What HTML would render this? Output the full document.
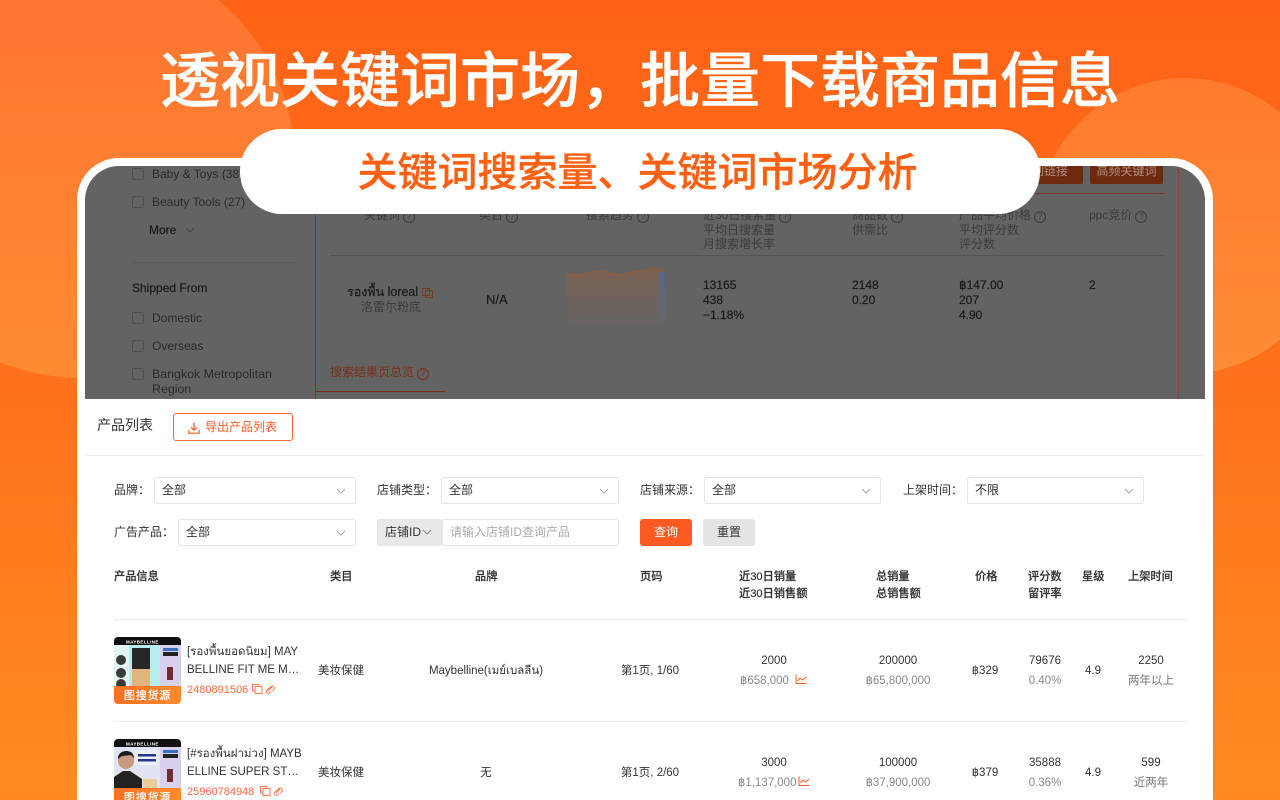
<!DOCTYPE html>
<html lang="zh-CN">
<head>
<meta charset="utf-8">
<title>透视关键词市场</title>
<style>
html,body{margin:0;padding:0;width:1280px;height:800px;overflow:hidden}
body{position:relative;font-family:"Liberation Sans","Noto Sans CJK SC",sans-serif;background:linear-gradient(180deg,#ff6216 0%,#ff6c1a 35%,#ff8a22 100%)}
.a{position:absolute;white-space:nowrap}
.c{position:absolute;white-space:nowrap;transform:translateX(-50%);text-align:center}
.circle{position:absolute;border-radius:50%}
#card{position:absolute;left:77px;top:158px;width:1136px;height:660px;background:#fff;border-radius:42px 42px 0 0}
#gray{position:absolute;left:85px;top:166px;width:1120px;height:233px;background:#636363;border-radius:34px 34px 0 0;overflow:hidden}
#gray .a,#gray .c{font-size:12px;color:#2b2b2b;line-height:15px}
#gray .d{color:#3c3c3c}
#gray .k{color:#1a1a1a;-webkit-text-stroke:.2px #1a1a1a}
.cb{position:absolute;width:10px;height:10px;border:1px solid #515151;border-radius:2px}
.q{display:inline-block;width:10px;height:10px;border:1px solid #3c3c3c;border-radius:50%;font-size:8px;line-height:10px;text-align:center;margin-left:3px;vertical-align:0;color:#3c3c3c}
#pill{position:absolute;left:240px;top:129px;width:795px;padding-right:5px;height:85px;border-radius:42px;background:#fff;text-align:center;color:#ff6114;font-size:40px;line-height:89px;font-weight:500;-webkit-text-stroke:.3px #ff6114}
#title{position:absolute;left:0;top:43px;width:1280px;text-align:center;color:#fff;font-size:60px;line-height:78px;font-weight:500;-webkit-text-stroke:.5px #fff}
.box{position:absolute;border:1px solid #e4e4e4;border-radius:3px;background:#fff;font-size:12px;line-height:25px;color:#333;padding-left:7px;box-sizing:border-box;height:27px}
.chev{position:absolute}
.l{font-size:12px;color:#333;line-height:16px}
.h{font-size:11.2px;color:#333;line-height:17px;font-weight:500;-webkit-text-stroke:.2px #333}
.t{font-size:11.5px;color:#333;line-height:16px}
.g{color:#888}
.o{color:#ff6a3d}
.hr{position:absolute;height:1px;background:#eeeeee}
</style>
</head>
<body>
<div class="circle" style="left:-133px;top:-50px;width:428px;height:428px;background:linear-gradient(180deg,#ff7331 0%,#ff8a32 100%)"></div>
<div class="circle" style="left:1037px;top:78px;width:296px;height:296px;background:linear-gradient(180deg,#ff7a2e 0%,#ff8c36 100%)"></div>
<div id="title">透视关键词市场，批量下载商品信息</div>

<div id="card"></div>
<div id="gray">
  <div class="cb" style="left:47px;top:2px"></div><div class="a" style="left:67px;top:1px">Baby &amp; Toys (38)</div>
  <div class="cb" style="left:47px;top:30px"></div><div class="a" style="left:67px;top:29px">Beauty Tools (27)</div>
  <div class="a k" style="left:64px;top:57px">More</div>
  <svg class="a" style="left:101px;top:62px" width="8" height="5" viewBox="0 0 8 5"><path d="M.5.5L4 4L7.500.5" fill="none" stroke="#444"/></svg>
  <div class="a" style="left:47px;top:96px;width:165px;height:1px;background:#5b5b5b"></div>
  <div class="a k" style="left:47px;top:115px">Shipped From</div>
  <div class="cb" style="left:47px;top:146px"></div><div class="a" style="left:67px;top:145px">Domestic</div>
  <div class="cb" style="left:47px;top:174px"></div><div class="a" style="left:67px;top:173px">Overseas</div>
  <div class="cb" style="left:47px;top:202px"></div><div class="a" style="left:67px;top:201px;font-size:12.400px">Bangkok Metropolitan<br>Region</div>

  <div class="a" style="left:230px;top:0;width:1px;height:233px;background:#7a3620"></div>
  <div class="a" style="left:1093px;top:0;width:1px;height:233px;background:#7f4a36"></div>
  <div class="a" style="left:231px;top:27px;width:848px;height:1px;background:#753a24"></div>
  <div class="a" style="left:245px;top:89px;width:835px;height:1px;background:#555"></div>
  <div class="a" style="left:231px;top:225px;width:129px;height:1px;background:#7a3018"></div>

  <div class="a" style="left:920px;top:-8px;width:78px;height:26px;background:#6d2a0f;border-radius:2px;color:#b08d7f;text-align:center;line-height:26px">复制链接</div>
  <div class="a" style="left:1005px;top:-8px;width:73px;height:26px;background:#6d2a0f;border-radius:2px;color:#b08d7f;text-align:center;line-height:26px">高频关键词</div>

  <div class="a d" style="left:279px;top:42px">关键词<span class="q">?</span></div>
  <div class="a d" style="left:394px;top:42px">类目<span class="q">?</span></div>
  <div class="a d" style="left:501px;top:42px">搜索趋势<span class="q">?</span></div>
  <div class="a d" style="left:618px;top:42px;line-height:14px">近30日搜索量<span class="q">?</span><br>平均日搜索量<br>月搜索增长率</div>
  <div class="a d" style="left:767px;top:42px;line-height:14px">商品数<span class="q">?</span><br>供需比</div>
  <div class="a d" style="left:874px;top:42px;line-height:14px">产品平均价格<span class="q">?</span><br>平均评分数<br>评分数</div>
  <div class="a d" style="left:1004px;top:42px">ppc竞价<span class="q">?</span></div>

  <div class="a k" style="left:262px;top:119px;font-size:12.500px">รองพื้น loreal</div>
  <div class="a" style="left:337px;top:122px;width:6px;height:6px;border:1px solid #7a3a22"></div>
  <div class="a" style="left:340px;top:124px;width:6px;height:6px;border:1px solid #7a3a22"></div>
  <div class="a d" style="left:276px;top:134px">洛雷尔粉底</div>
  <div class="a k" style="left:401px;top:126px;font-size:13px">N/A</div>

  <svg class="a" style="left:482px;top:100px" width="100" height="60" viewBox="0 0 100 60">
    <defs>
      <linearGradient id="tr" x1="0" y1="0" x2="0" y2="1"><stop offset="0" stop-color="#7a6050"/><stop offset="1" stop-color="#666464"/></linearGradient>
      <linearGradient id="tb" x1="0" y1="0" x2="0" y2="1"><stop offset="0" stop-color="#5a6488"/><stop offset="1" stop-color="#666666"/></linearGradient>
    </defs>
    <path d="M0 8 L12 8.500 L18 8 L26 5.500 L36 5.500 L46 8 L58 8.500 L66 6 L74 5 L84 3 L92 3 L98 5 L98 58 L0 58Z" fill="url(#tr)"/>
    <rect x="92" y="6" width="6" height="52" fill="url(#tb)"/>
    <path d="M0 8 L12 8.500 L18 8 L26 5.500 L36 5.500 L46 8 L58 8.500 L66 6 L74 5 L84 3 L92 3 L98 5" fill="none" stroke="#9a5a2c" stroke-width="1"/>
  </svg>

  <div class="a k" style="left:618px;top:112px">13165<br>438<br>−1.18%</div>
  <div class="a k" style="left:767px;top:112px">2148<br>0.20</div>
  <div class="a k" style="left:874px;top:112px">฿147.00<br>207<br>4.90</div>
  <div class="a k" style="left:1004px;top:112px">2</div>
  <div class="a" style="left:245px;top:199px;color:#7a3016">搜索结果页总览<span class="q" style="border-color:#7a3016;color:#7a3016">?</span></div>
</div>

<div id="pill">关键词搜索量、关键词市场分析</div>

<div class="a" style="left:97px;top:415px;font-size:14px;line-height:20px;color:#333">产品列表</div>
<div class="a" style="left:173px;top:413px;width:120px;height:28px;box-sizing:border-box;border:1px solid #ff6a3d;border-radius:3px;background:#fff"></div>
<svg class="a" style="left:187px;top:421px" width="14" height="14" viewBox="0 0 14 14"><path d="M7 1.500V9M4 6.300L7 9.200L10 6.300M1.800 9V12.200H12.200V9" fill="none" stroke="#ff5a24" stroke-width="1.200"/></svg>
<div class="a" style="left:205px;top:419px;font-size:12px;line-height:16px;color:#ff5a24">导出产品列表</div>
<div class="hr" style="left:85px;top:455px;width:1120px;background:#ececec"></div>

<div class="a l" style="left:114px;top:482px">品牌：</div>
<div class="box" style="left:154px;top:477px;width:202px">全部</div>
<div class="a l" style="left:377px;top:482px">店铺类型：</div>
<div class="box" style="left:441px;top:477px;width:178px">全部</div>
<div class="a l" style="left:640px;top:482px">店铺来源：</div>
<div class="box" style="left:704px;top:477px;width:177px">全部</div>
<div class="a l" style="left:903px;top:482px">上架时间：</div>
<div class="box" style="left:967px;top:477px;width:177px">不限</div>
<svg class="chev" style="left:336px;top:488px" width="10" height="6" viewBox="0 0 10 6"><path d="M1 1L5 5L9 1" fill="none" stroke="#a5a5a5"/></svg>
<svg class="chev" style="left:599px;top:488px" width="10" height="6" viewBox="0 0 10 6"><path d="M1 1L5 5L9 1" fill="none" stroke="#a5a5a5"/></svg>
<svg class="chev" style="left:861px;top:488px" width="10" height="6" viewBox="0 0 10 6"><path d="M1 1L5 5L9 1" fill="none" stroke="#a5a5a5"/></svg>
<svg class="chev" style="left:1124px;top:488px" width="10" height="6" viewBox="0 0 10 6"><path d="M1 1L5 5L9 1" fill="none" stroke="#a5a5a5"/></svg>

<div class="a l" style="left:114px;top:524px">广告产品：</div>
<div class="box" style="left:178px;top:519px;width:178px">全部</div>
<svg class="chev" style="left:336px;top:530px" width="10" height="6" viewBox="0 0 10 6"><path d="M1 1L5 5L9 1" fill="none" stroke="#a5a5a5"/></svg>
<div class="box" style="left:442px;top:519px;width:177px;color:#aaa">请输入店铺ID查询产品</div>
<div class="box" style="left:377px;top:519px;width:65px;background:#e9e9e9">店铺ID</div>
<svg class="chev" style="left:422px;top:529px" width="10" height="6" viewBox="0 0 10 6"><path d="M1 1L5 5L9 1" fill="none" stroke="#888"/></svg>
<div class="a" style="left:640px;top:519px;width:52px;height:27px;background:#ff5a22;border-radius:3px;color:#fff;font-size:12px;line-height:27px;text-align:center">查询</div>
<div class="a" style="left:703px;top:519px;width:52px;height:27px;background:#e4e4e4;border-radius:3px;color:#333;font-size:12px;line-height:27px;text-align:center">重置</div>

<div class="a h" style="left:114px;top:569px">产品信息</div>
<div class="a h" style="left:330px;top:569px">类目</div>
<div class="a h" style="left:475px;top:569px">品牌</div>
<div class="a h" style="left:640px;top:569px">页码</div>
<div class="a h" style="left:739px;top:569px">近30日销量<br>近30日销售额</div>
<div class="a h" style="left:876px;top:569px">总销量<br>总销售额</div>
<div class="a h" style="left:975px;top:569px">价格</div>
<div class="a h" style="left:1028px;top:569px">评分数<br>留评率</div>
<div class="a h" style="left:1082px;top:569px">星级</div>
<div class="a h" style="left:1128px;top:569px">上架时间</div>
<div class="hr" style="left:114px;top:619px;width:1075px"></div>
<div class="hr" style="left:114px;top:721px;width:1075px"></div>

<!-- Row 1 -->
<svg class="a" style="left:114px;top:637px;border-radius:4px" width="67" height="67" viewBox="0 0 67 67">
  <defs><linearGradient id="st" x1="0" y1="0" x2="1" y2="0"><stop offset="0" stop-color="#ff6f24"/><stop offset="1" stop-color="#ff8a2e"/></linearGradient></defs>
  <rect width="67" height="67" fill="#eef5f6"/>
  <rect width="67" height="8" fill="#111"/>
  <text x="12" y="6.500" font-size="4.500" fill="#fff" font-family="Liberation Sans" font-weight="700" letter-spacing=".4">MAYBELLINE</text>
  <rect y="8" width="46" height="41" fill="#b5ecec"/>
  <rect y="8" width="15" height="41" fill="#e3f3f3"/>
  <circle cx="7" cy="23" r="5" fill="#3a3a3a"/><circle cx="7" cy="36" r="5" fill="#3a3a3a"/><circle cx="7" cy="47" r="5" fill="#3a3a3a"/>
  <rect x="18" y="11" width="18" height="21" fill="#262626"/>
  <rect x="18" y="32" width="18" height="17" fill="#e0b57d"/>
  <rect x="46" y="8" width="21" height="41" fill="#d9d0ee"/>
  <rect x="49" y="11" width="15" height="3" fill="#3a70c0"/>
  <rect x="49" y="15" width="15" height="4" fill="#222"/>
  <rect x="53" y="30" width="6" height="13" fill="#6d2c33"/>
  <rect y="49" width="67" height="18" fill="url(#st)"/>
  <text x="33.500" y="62" text-anchor="middle" font-size="11" fill="#fff" stroke="#fff" stroke-width=".25" font-family="Noto Sans CJK SC" letter-spacing=".8">图搜货源</text>
</svg>
<div class="a t" style="left:187px;top:644px;line-height:17.500px">[รองพื้นยอดนิยม] MAY<br>BELLINE FIT ME M…</div>
<div class="a o" style="left:187px;top:683px;font-size:11px;line-height:15px">2480891506</div>
<svg class="a" style="left:251px;top:683px" width="28" height="12" viewBox="0 0 28 12" fill="none" stroke="#ff6a3d" stroke-width=".9"><rect x="1.500" y="1.500" width="6.500" height="6.500"/><rect x="4" y="3.500" width="7" height="7" fill="#fff"/><path d="M17 8L21 4M18 5.500L19.500 4A1.800 1.800 0 0 1 23 6.500L21.500 8M20 8.500L18.500 10A1.800 1.800 0 0 1 16 7L17.500 5.500"/></svg>
<div class="a t" style="left:318px;top:663px">美妆保健</div>
<div class="c t" style="left:486px;top:663px">Maybelline(เมย์เบลลีน)</div>
<div class="c t" style="left:650px;top:663px">第1页, 1/60</div>
<div class="c t" style="left:774px;top:653px">2000</div>
<div class="a t g" style="left:740px;top:673px">฿658,000</div>
<svg class="a" style="left:795px;top:674px" width="12" height="11" viewBox="0 0 12 11" fill="none" stroke="#ff5a24" stroke-width="1"><path d="M1 .5V9.500H11.500M2.500 7L5 4L7.500 6L11 3"/></svg>
<div class="c t" style="left:898px;top:653px">200000</div>
<div class="c t g" style="left:898px;top:673px">฿65,800,000</div>
<div class="c t" style="left:985px;top:663px">฿329</div>
<div class="c t" style="left:1045px;top:653px">79676</div>
<div class="c t g" style="left:1045px;top:673px">0.40%</div>
<div class="c t" style="left:1093px;top:663px">4.9</div>
<div class="c t" style="left:1151px;top:653px">2250</div>
<div class="c t g" style="left:1151px;top:673px;color:#777">两年以上</div>

<!-- Row 2 -->
<svg class="a" style="left:114px;top:739px;border-radius:4px" width="67" height="67" viewBox="0 0 67 67">
  <rect width="67" height="67" fill="#dfe3f2"/>
  <rect width="67" height="8" fill="#111"/>
  <text x="12" y="6.500" font-size="4.500" fill="#fff" font-family="Liberation Sans" font-weight="700" letter-spacing=".4">MAYBELLINE</text>
  <circle cx="12" cy="22" r="8" fill="#c89a80"/>
  <path d="M4 20C3 10 20 9 20 19L17 16L8 17Z" fill="#1c1c1c"/>
  <path d="M0 49V38L9 32H16L28 40V49Z" fill="#222"/>
  <rect x="21" y="11" width="23" height="15" fill="#eef0f8"/>
  <rect x="24" y="15" width="18" height="2.500" fill="#26348c"/><rect x="24" y="20" width="18" height="2.500" fill="#26348c"/>
  <rect x="29" y="40" width="14" height="9" fill="#eccb9a"/>
  <rect x="46" y="8" width="21" height="41" fill="#d9d0ee"/>
  <rect x="49" y="11" width="15" height="3" fill="#3a70c0"/>
  <rect x="49" y="15" width="15" height="4" fill="#222"/>
  <rect x="53" y="30" width="6" height="13" fill="#6d2c33"/>
  <rect y="49" width="67" height="18" fill="url(#st)"/>
  <text x="33.500" y="62" text-anchor="middle" font-size="11" fill="#fff" stroke="#fff" stroke-width=".25" font-family="Noto Sans CJK SC" letter-spacing=".8">图搜货源</text>
</svg>
<div class="a t" style="left:187px;top:746px;line-height:17.500px">[#รองพื้นฝาม่วง] MAYB<br>ELLINE SUPER ST…</div>
<div class="a o" style="left:187px;top:785px;font-size:11px;line-height:15px">25960784948</div>
<svg class="a" style="left:259px;top:785px" width="28" height="12" viewBox="0 0 28 12" fill="none" stroke="#ff6a3d" stroke-width=".9"><rect x="1.500" y="1.500" width="6.500" height="6.500"/><rect x="4" y="3.500" width="7" height="7" fill="#fff"/><path d="M17 8L21 4M18 5.500L19.500 4A1.800 1.800 0 0 1 23 6.500L21.500 8M20 8.500L18.500 10A1.800 1.800 0 0 1 16 7L17.500 5.500"/></svg>
<div class="a t" style="left:318px;top:765px">美妆保健</div>
<div class="c t" style="left:486px;top:765px">无</div>
<div class="c t" style="left:650px;top:765px">第1页, 2/60</div>
<div class="c t" style="left:774px;top:755px">3000</div>
<div class="a t g" style="left:738px;top:775px">฿1,137,000</div>
<svg class="a" style="left:798px;top:776px" width="12" height="11" viewBox="0 0 12 11" fill="none" stroke="#ff5a24" stroke-width="1"><path d="M1 .5V9.500H11.500M2.500 7L5 4L7.500 6L11 3"/></svg>
<div class="c t" style="left:898px;top:755px">100000</div>
<div class="c t g" style="left:898px;top:775px">฿37,900,000</div>
<div class="c t" style="left:985px;top:765px">฿379</div>
<div class="c t" style="left:1045px;top:755px">35888</div>
<div class="c t g" style="left:1045px;top:775px">0.36%</div>
<div class="c t" style="left:1093px;top:765px">4.9</div>
<div class="c t" style="left:1151px;top:755px">599</div>
<div class="c t g" style="left:1151px;top:775px;color:#777">近两年</div>
</body>
</html>
